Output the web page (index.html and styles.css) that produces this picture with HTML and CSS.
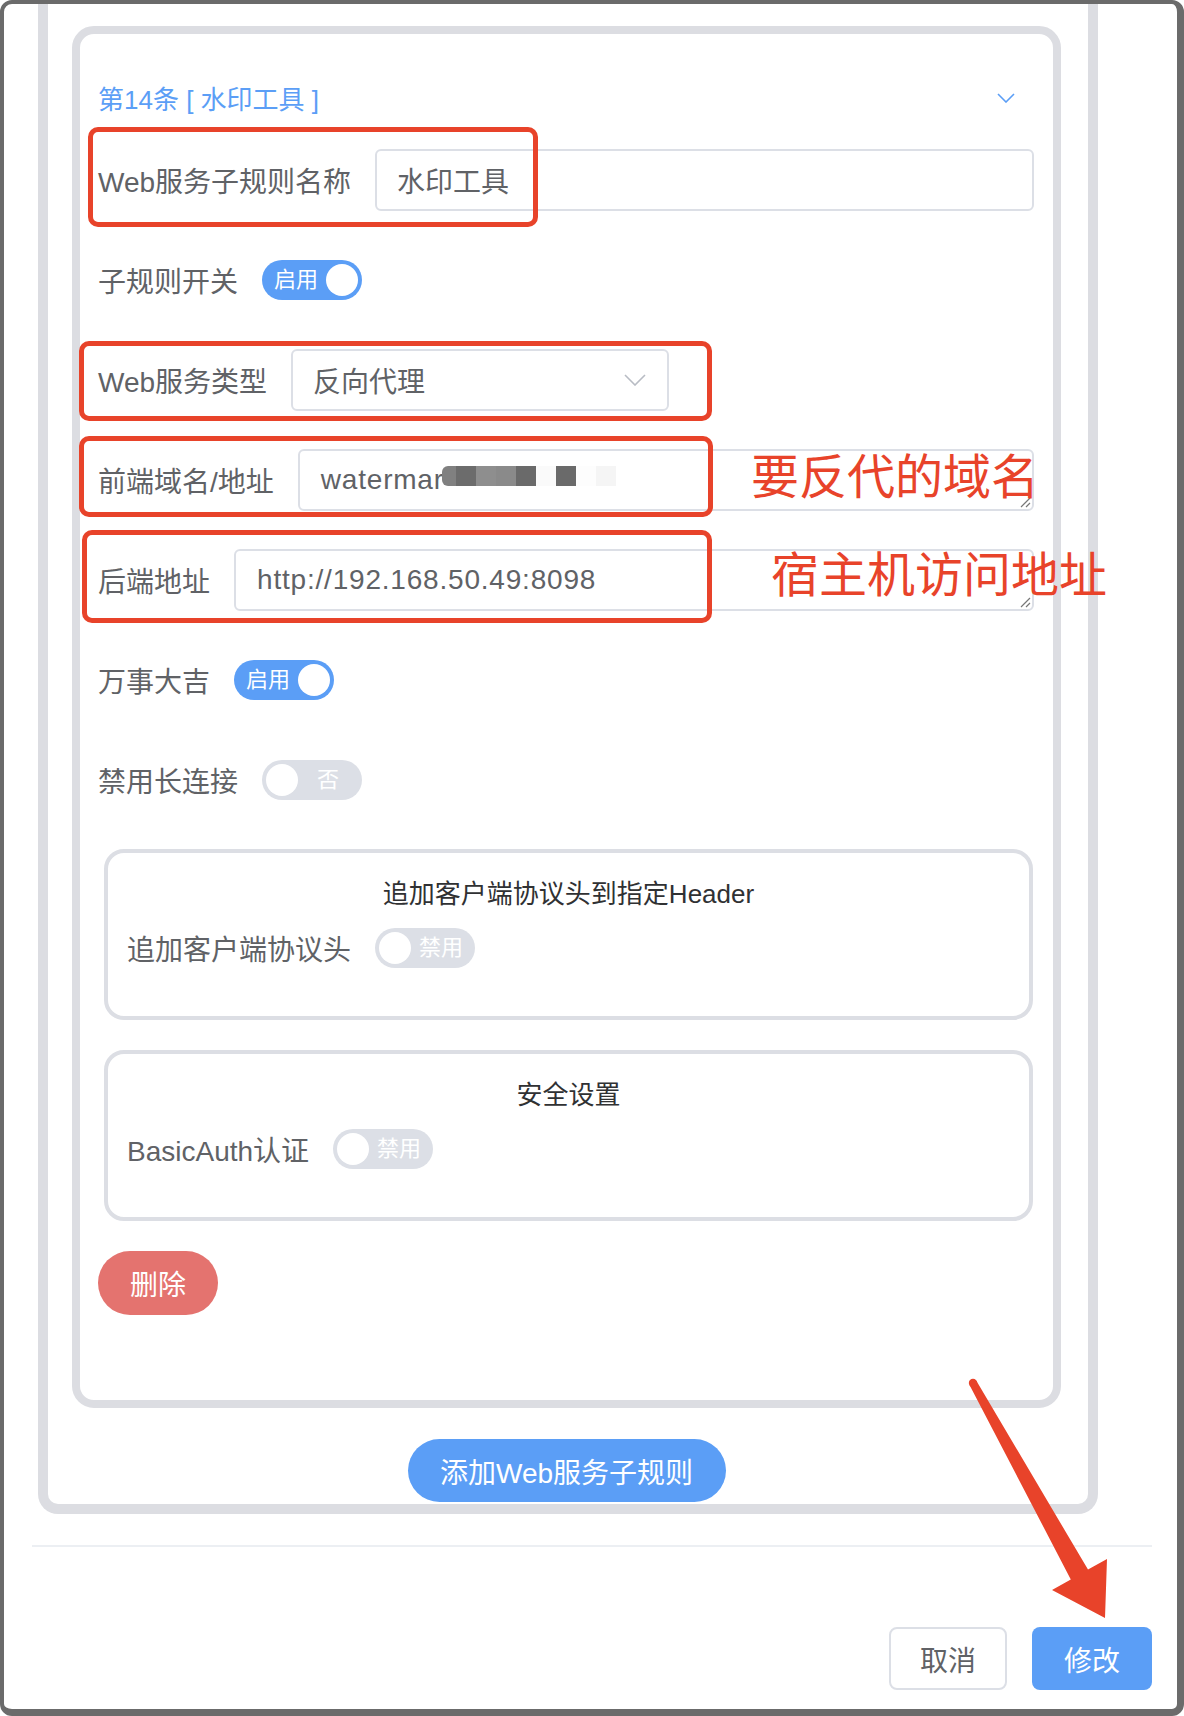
FILE: index.html
```html
<!DOCTYPE html>
<html lang="zh-CN">
<head>
<meta charset="utf-8">
<title>Web服务子规则</title>
<link rel="stylesheet" href="styles.css">
</head>
<body>
<div class="frame">
  <div class="panel">
    <div class="card">
      <div class="card-head">
        <span class="card-title">第14条 [ 水印工具 ]</span>
        <svg class="chev" viewBox="0 0 18 10" width="18" height="10"><path d="M1 1 L9 9 L17 1" fill="none" stroke="#5b9ef6" stroke-width="1.6"/></svg>
      </div>

      <div class="item">
        <span class="lbl">Web服务子规则名称</span>
        <div class="field">水印工具</div>
      </div>

      <div class="item">
        <span class="lbl">子规则开关</span>
        <span class="switch on"><span class="sw-text">启用</span><span class="knob"></span></span>
      </div>

      <div class="item">
        <span class="lbl">Web服务类型</span>
        <div class="field select">反向代理<svg class="sel-chev" viewBox="0 0 22 12" width="22" height="12"><path d="M1 1 L11 11 L21 1" fill="none" stroke="#b8bcc4" stroke-width="1.6"/></svg></div>
      </div>

      <div class="item">
        <span class="lbl">前端域名/地址</span>
        <div class="field area wide">watermar
          <div class="mosaic">
            <span class="m m1"></span><span class="m m2"></span><span class="m m3"></span><span class="m m4"></span><span class="m m5"></span><span class="m m6"></span><span class="m m7"></span><span class="m m8"></span><span class="m m9"></span>
          </div>
          <svg class="grip" viewBox="0 0 12 12" width="12" height="12"><path d="M11 2 L2 11 M11 7 L7 11" stroke="#777" stroke-width="1.2" fill="none"/></svg>
        </div>
      </div>

      <div class="item">
        <span class="lbl">后端地址</span>
        <div class="field area wide">http://192.168.50.49:8098
          <svg class="grip" viewBox="0 0 12 12" width="12" height="12"><path d="M11 2 L2 11 M11 7 L7 11" stroke="#777" stroke-width="1.2" fill="none"/></svg>
        </div>
      </div>

      <div class="item">
        <span class="lbl">万事大吉</span>
        <span class="switch on"><span class="sw-text">启用</span><span class="knob"></span></span>
      </div>

      <div class="item">
        <span class="lbl">禁用长连接</span>
        <span class="switch off"><span class="knob"></span><span class="sw-text">否</span></span>
      </div>

      <div class="group">
        <div class="group-title">追加客户端协议头到指定Header</div>
        <div class="group-row">
          <span class="lbl">追加客户端协议头</span>
          <span class="switch off"><span class="knob"></span><span class="sw-text">禁用</span></span>
        </div>
      </div>

      <div class="group">
        <div class="group-title">安全设置</div>
        <div class="group-row">
          <span class="lbl">BasicAuth认证</span>
          <span class="switch off"><span class="knob"></span><span class="sw-text">禁用</span></span>
        </div>
      </div>

      <button class="btn-del">删除</button>
    </div>

    <div class="add-wrap">
      <button class="btn-add">添加Web服务子规则</button>
    </div>
  </div>

  <div class="divider"></div>

  <div class="footer">
    <button class="btn btn-cancel">取消</button>
    <button class="btn btn-primary">修改</button>
  </div>

  <div class="mark mark1"></div>
  <div class="mark mark2"></div>
  <div class="mark mark3"></div>
  <div class="mark mark4"></div>
  <div class="note note1">要反代的域名</div>
  <div class="note note2">宿主机访问地址</div>
  <svg class="arrow" viewBox="0 0 1184 1716" width="1184" height="1716">
    <polygon points="969.5,1385 976.5,1381 1088,1569.6 1107,1559 1105,1618 1052,1590 1070.8,1579.4" fill="#e8432a"/>
    <circle cx="973" cy="1383" r="4.2" fill="#e8432a"/>
  </svg>
</div>
</body>
</html>
```

FILE: styles.css
```css
* { box-sizing: border-box; margin: 0; padding: 0; }
html, body { width: 1184px; height: 1716px; background: #fff; overflow: hidden; }
body { font-family: "Liberation Sans", "Noto Sans CJK SC", sans-serif; color: #606266; }

.frame {
  position: relative;
  width: 1184px;
  height: 1716px;
  border: solid #6b6b6b;
  border-width: 4px 7px 7px 4px;
  border-radius: 12px;
  background: #fff;
  overflow: hidden;
}

.panel {
  margin-left: 34px;
  width: 1060px;
  border: 10px solid #dcdde2;
  border-top: 0;
  border-radius: 0 0 20px 20px;
  padding: 22px 27px 2px 24px;
}

.card {
  border: 8px solid #dcdde2;
  border-radius: 22px;
  padding: 38px 19px 85px 18px;
}

.card-head {
  display: flex;
  align-items: center;
  justify-content: space-between;
  height: 50px;
  margin-bottom: 27px;
}
.card-title { font-size: 26px; color: #5b9ef6; white-space: pre; }
.chev { display: block; margin-right: 19px; margin-top: 2px; }

.item {
  display: flex;
  align-items: center;
  height: 62px;
  margin-bottom: 38px;
}
.lbl {
  font-size: 28px;
  padding-right: 24px;
  white-space: nowrap;
  color: #606266;
}

.field {
  position: relative;
  flex: 1;
  height: 62px;
  border: 2px solid #dcdfe6;
  border-radius: 6px;
  display: flex;
  align-items: center;
  padding: 0 20px;
  font-size: 28px;
  color: #606266;
  white-space: nowrap;
}
.field.area { padding-left: 21px; }
.field.wide { letter-spacing: 0.8px; }
.select {
  flex: none;
  width: 378px;
  justify-content: space-between;
  padding-right: 21px;
}
.sel-chev { display: block; }

.grip { position: absolute; right: 1px; bottom: 1px; }

.mosaic {
  position: absolute;
  left: 142px;
  top: 15px;
  display: flex;
  height: 20px;
}
.m { display: block; height: 20px; width: 20px; }
.m1 { width: 14px; background: #808080; border-radius: 6px 0 0 6px; }
.m2 { background: #6c6c6c; }
.m3 { background: #8e8e8e; }
.m4 { background: #8a8a8a; }
.m5 { background: #6a6a6a; }
.m6 { background: #fafafa; }
.m7 { background: #6a6a6a; }
.m8 { background: #fdfdfd; }
.m9 { background: #f5f5f5; }

.switch {
  display: inline-flex;
  align-items: center;
  width: 100px;
  height: 40px;
  border-radius: 20px;
  padding: 0 4px;
  background: #5b9ef6;
}
.switch.off { background: #dcdfe6; }
.sw-text {
  flex: 1;
  text-align: center;
  font-size: 22px;
  line-height: 40px;
  color: #fff;
}
.knob {
  width: 32px;
  height: 32px;
  border-radius: 50%;
  background: #fff;
}

.group {
  border: 4px solid #dcdee4;
  border-radius: 20px;
  margin: 0 1px 30px 6px;
  padding: 23px 19px 48px;
}
.group-title {
  text-align: center;
  font-size: 26px;
  line-height: 36px;
  color: #303133;
  margin-bottom: 16px;
}
.group-row {
  display: flex;
  align-items: center;
  height: 40px;
}

button { font: inherit; cursor: pointer; }

.btn-del {
  display: block;
  width: 120px;
  height: 64px;
  border: 0;
  border-radius: 32px;
  background: #e4736f;
  color: #fff;
  font-size: 28px;
}

.add-wrap {
  display: flex;
  justify-content: center;
  margin-top: 31px;
}
.btn-add {
  width: 318px;
  height: 63px;
  border: 0;
  border-radius: 32px;
  background: #5b9ef6;
  color: #fff;
  font-size: 28px;
}

.divider {
  margin: 31px 0 0 28px;
  width: 1120px;
  height: 2px;
  background: #eceff3;
}

.footer {
  margin: 80px 0 0 28px;
  width: 1120px;
  display: flex;
  justify-content: flex-end;
  gap: 25px;
}
.btn {
  width: 118px;
  height: 63px;
  border-radius: 8px;
  font-size: 28px;
}
.btn-cancel { background: #fff; border: 2px solid #dcdfe6; color: #606266; }
.btn-primary { width: 120px; background: #5b9ef6; border: 0; color: #fff; }

.mark {
  position: absolute;
  border: 5px solid #e8432a;
  border-radius: 10px;
}
.mark1 { left: 84px; top: 123px; width: 450px; height: 100px; }
.mark2 { left: 75px; top: 337px; width: 633px; height: 80px; }
.mark3 { left: 75px; top: 432px; width: 634px; height: 81px; }
.mark4 { left: 78px; top: 526px; width: 630px; height: 93px; }

.note {
  position: absolute;
  font-family: "Noto Sans CJK SC", sans-serif;
  font-size: 48px;
  line-height: 48px;
  color: #e8432a;
  white-space: nowrap;
}
.note1 { left: 747px; top: 445px; }
.note2 { left: 767px; top: 543px; }

.arrow {
  position: absolute;
  left: -4px;
  top: -4px;
  pointer-events: none;
}
```
